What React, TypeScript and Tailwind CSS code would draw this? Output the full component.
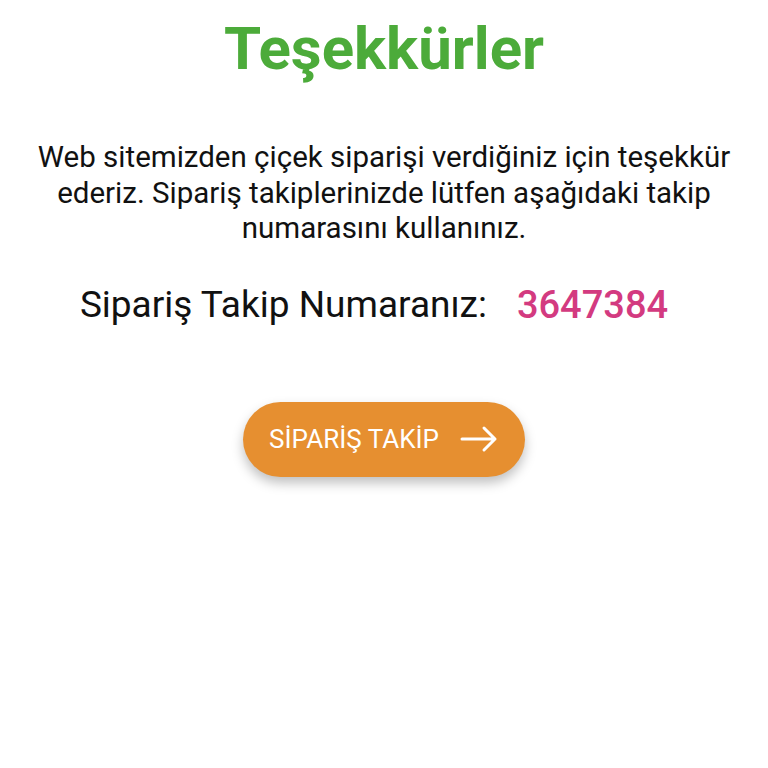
export default function App() {
  return (
    <div className="w-[768px] h-[768px] bg-white flex flex-col items-center" style={{ fontFamily: 'Roboto, "Noto Sans", sans-serif' }}>
      <h1 className="mt-[14px] text-[60px] leading-[70px] font-bold text-[#4cab3a]">Teşekkürler</h1>
      <p className="mt-[56px] px-[30px] text-center text-[29.5px] leading-[35.5px] text-[#111]">
        Web sitemizden çiçek siparişi verdiğiniz için teşekkür ederiz. Sipariş takiplerinizde lütfen aşağıdaki takip numarasını kullanınız.
      </p>
      <div className="mt-[36px] pr-[20px] flex items-center text-[37px] leading-[44px]">
        <span className="text-[#111]">Sipariş Takip Numaranız:</span>
        <span className="ml-[30px] text-[38px] font-medium text-[#d33a80]">3647384</span>
      </div>
      <button className="mt-[75px] w-[282px] h-[75px] rounded-full bg-[#e68f30] shadow-[0_6px_12px_rgba(0,0,0,0.25)] flex items-center justify-center gap-[20px] text-white text-[26px]">
        <span>SİPARİŞ TAKİP</span>
        <svg width="40" height="28" viewBox="0 0 40 28" fill="none" stroke="white" strokeWidth="3" strokeLinecap="round" strokeLinejoin="round">
          <path d="M3 14h33M25 3l11 11-11 11" />
        </svg>
      </button>
    </div>
  );
}
